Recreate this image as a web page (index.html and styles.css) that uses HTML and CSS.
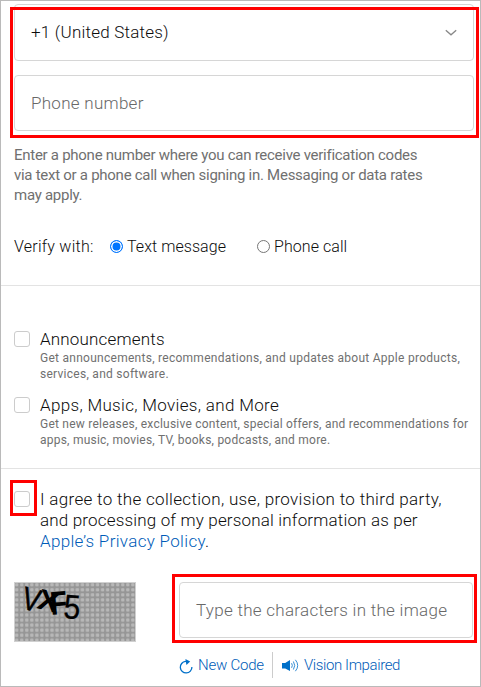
FILE: index.html
```html
<!DOCTYPE html>
<html lang="en">
<head>
    <meta charset="UTF-8">
    <meta name="viewport" content="width=device-width, initial-scale=1.0">
    <title>Create Your Account</title>
    <link rel="stylesheet" href="styles.css">
</head>
<body>

<!-- Phone number -->
<section class="phone">
    <div class="highlight highlight-phone"></div>
    <div class="field select">
        <span class="country">+1 (United States)</span>
        <svg class="chevron" width="12" height="8" viewBox="0 0 12 8"><path d="M0.8 1.2 L6 5.8 L11.2 1.2" fill="none" stroke="#888" stroke-width="1.3"/></svg>
    </div>
    <div class="field"><span class="placeholder">Phone number</span></div>
    <p class="help">Enter a phone number where you can receive verification codes<br>via text or a phone call when signing in. Messaging or data rates<br>may apply.</p>
    <div class="verify">
        <span class="verify-label">Verify with:</span>
        <label class="radio"><i class="dot on"></i><span>Text message</span></label>
        <label class="radio"><i class="dot"></i><span>Phone call</span></label>
    </div>
</section>

<!-- Subscriptions -->
<section class="news">
    <div class="option">
        <i class="checkbox"></i>
        <div>
            <h2>Announcements</h2>
            <p>Get announcements, recommendations, and updates about Apple products,<br>services, and software.</p>
        </div>
    </div>
    <div class="option">
        <i class="checkbox"></i>
        <div>
            <h2 class="wide">Apps, Music, Movies, and More</h2>
            <p class="tight">Get new releases, exclusive content, special offers, and recommendations for<br>apps, music, movies, TV, books, podcasts, and more.</p>
        </div>
    </div>
</section>

<!-- Privacy and captcha -->
<section class="privacy">
    <div class="option">
        <i class="checkbox"><span class="highlight highlight-check"></span></i>
        <p class="agree">I agree to the collection, use, provision to third party,<br><span class="agree-second">and processing of my personal information as per</span><br><a>Apple’s Privacy Policy</a>.</p>
    </div>
    <div class="captcha-row">
        <svg class="captcha" width="122" height="60" viewBox="0 0 122 60">
            <defs>
                <pattern id="grid" width="5.05" height="5.05" patternUnits="userSpaceOnUse">
                    <rect width="5.05" height="5.05" fill="#969696"/>
                    <rect x="1" y="1" width="3.4" height="3.4" rx="1" fill="#b8b8b8"/>
                </pattern>
            </defs>
            <rect x="0.5" y="0.5" width="121" height="59" fill="url(#grid)" stroke="#d0d0d0"/>
            <g class="glyphs">
                <text transform="translate(6 26) rotate(14) scale(.85 1)" font-size="32" stroke="#000" stroke-width=".5">V</text>
                <text transform="translate(22 26) rotate(14) scale(1.1 1)" font-size="29" class="heavy">X</text>
                <text transform="translate(37 33) rotate(-5) scale(.85 1)" font-size="33" class="heavy">F</text>
                <text transform="translate(49 36) rotate(4) scale(.88 1)" font-size="34" stroke="#000" stroke-width=".3">5</text>
            </g>
        </svg>
        <div class="captcha-entry">
            <div class="highlight highlight-entry"></div>
            <div class="field"><span class="placeholder">Type the characters in the image</span></div>
            <div class="links">
                <a class="new-code"><svg width="14" height="15" viewBox="0 0 14 15"><path d="M8 2.4 H6.5 A5.8 5.8 0 1 0 12.9 8" fill="none" stroke="#0070c9" stroke-width="1.3"/><path d="M6.4 0 L11.2 2.4 L7.4 6 Z" fill="#0070c9"/></svg><span>New Code</span></a>
                <a class="vision"><svg width="17" height="13" viewBox="0 0 17 13"><path d="M0 4 H3.2 L8 1 V12 L3.2 9.4 H0 Z" fill="#0070c9"/><path d="M9.6 4.2 Q11 6.5 9.6 8.8 M11.4 2.5 Q14 6.5 11.4 10.5 M13.4 0.8 Q18 6.5 13.4 12.2" fill="none" stroke="#0070c9" stroke-width=".8"/></svg><span>Vision Impaired</span></a>
            </div>
        </div>
    </div>
</section>

</body>
</html>
```
FILE: styles.css
```css
* {
    box-sizing: border-box;
}

body {
    margin: 0;
    width: 481px;
    height: 687px;
    overflow: hidden;
    background: #fff;
    border: 1px solid #bababa;
    font-family: Roboto, sans-serif;
    font-size: 17px;
    font-weight: 300;
    color: #0c0c0c;
    white-space: nowrap;
}

h2, p {
    margin: 0;
    font-weight: 300;
}

a {
    color: #005cb8;
}

section {
    position: relative;
    padding: 0 6px 0 13px;
}

.phone {
    height: 285px;
    padding-top: 3px;
    border-bottom: 1px solid #e3e3e3;
}

.field {
    display: flex;
    align-items: center;
    height: 56px;
    padding: 0 16px;
    border: 1px solid #d6d6d6;
    border-radius: 4px;
}

.select {
    justify-content: space-between;
    height: 57px;
    margin-bottom: 14px;
}

.country {
    margin-bottom: 2px;
    letter-spacing: 0.22px;
}

.placeholder {
    color: #686868;
    letter-spacing: 0.28px;
}

/* Red callouts drawn over the form */
.highlight {
    position: absolute;
    border: 3px solid #f00;
}

.highlight-phone {
    left: 9px;
    top: 6px;
    width: 469px;
    height: 131px;
}

.help {
    margin-top: 14px;
    font-size: 15px;
    font-weight: 400;
    line-height: 20px;
    letter-spacing: -0.27px;
    color: #707070;
}

.verify {
    display: flex;
    align-items: center;
    margin-top: 30px;
    height: 22px;
    font-size: 16px;
    letter-spacing: 0.06px;
}

.radio {
    display: flex;
    align-items: center;
    gap: 4px;
    width: 147px;
}

.verify-label {
    width: 96px;
    letter-spacing: 0.25px;
}

.dot {
    width: 13px;
    height: 13px;
    border: 1px solid #767676;
    border-radius: 50%;
}

.dot.on {
    border-color: #0075ff;
    background: #0075ff;
    box-shadow: inset 0 0 0 1.5px #fff;
}

.news {
    height: 183px;
    padding-top: 43px;
    border-bottom: 1px solid #e3e3e3;
}

.option {
    display: flex;
    gap: 10px;
}

.news .option {
    height: 66px;
}

.checkbox {
    position: relative;
    flex: none;
    width: 16px;
    height: 16px;
    margin-top: 2px;
    border: 1px solid #ccc;
    border-radius: 3px;
}

h2 {
    font-size: 17px;
    line-height: 21px;
    letter-spacing: 0.18px;
}

.wide {
    letter-spacing: 0.32px;
}

.news p {
    font-size: 12px;
    font-weight: 400;
    line-height: 16px;
    letter-spacing: 0.27px;
    color: #707070;
}

.news .tight {
    letter-spacing: 0.23px;
}

.privacy {
    padding-top: 20px;
}

.highlight-check {
    left: -5px;
    top: -12px;
    width: 27px;
    height: 36px;
}

.agree {
    line-height: 21px;
    letter-spacing: 0.32px;
}

.agree-second {
    letter-spacing: 0.17px;
}

.captcha-row {
    display: flex;
    justify-content: space-between;
    margin-top: 30px;
    padding-right: 1px;
}

.glyphs {
    font-family: "Liberation Sans", sans-serif;
    fill: #000;
}

.heavy {
    font-weight: 700;
}

.captcha-entry {
    position: relative;
    width: 294px;
}

.highlight-entry {
    left: -7px;
    top: -8px;
    width: 305px;
    height: 69px;
}

.links {
    display: flex;
    margin-top: 14px;
    height: 26px;
    font-size: 15px;
}

.links a {
    display: flex;
    align-items: center;
}

.new-code {
    width: 94px;
    gap: 5px;
    border-right: 1px solid #ccc;
    letter-spacing: -0.22px;
}

.new-code svg {
    margin-top: 2px;
}

.vision {
    gap: 5px;
    padding-left: 9px;
    letter-spacing: -0.4px;
}
```
